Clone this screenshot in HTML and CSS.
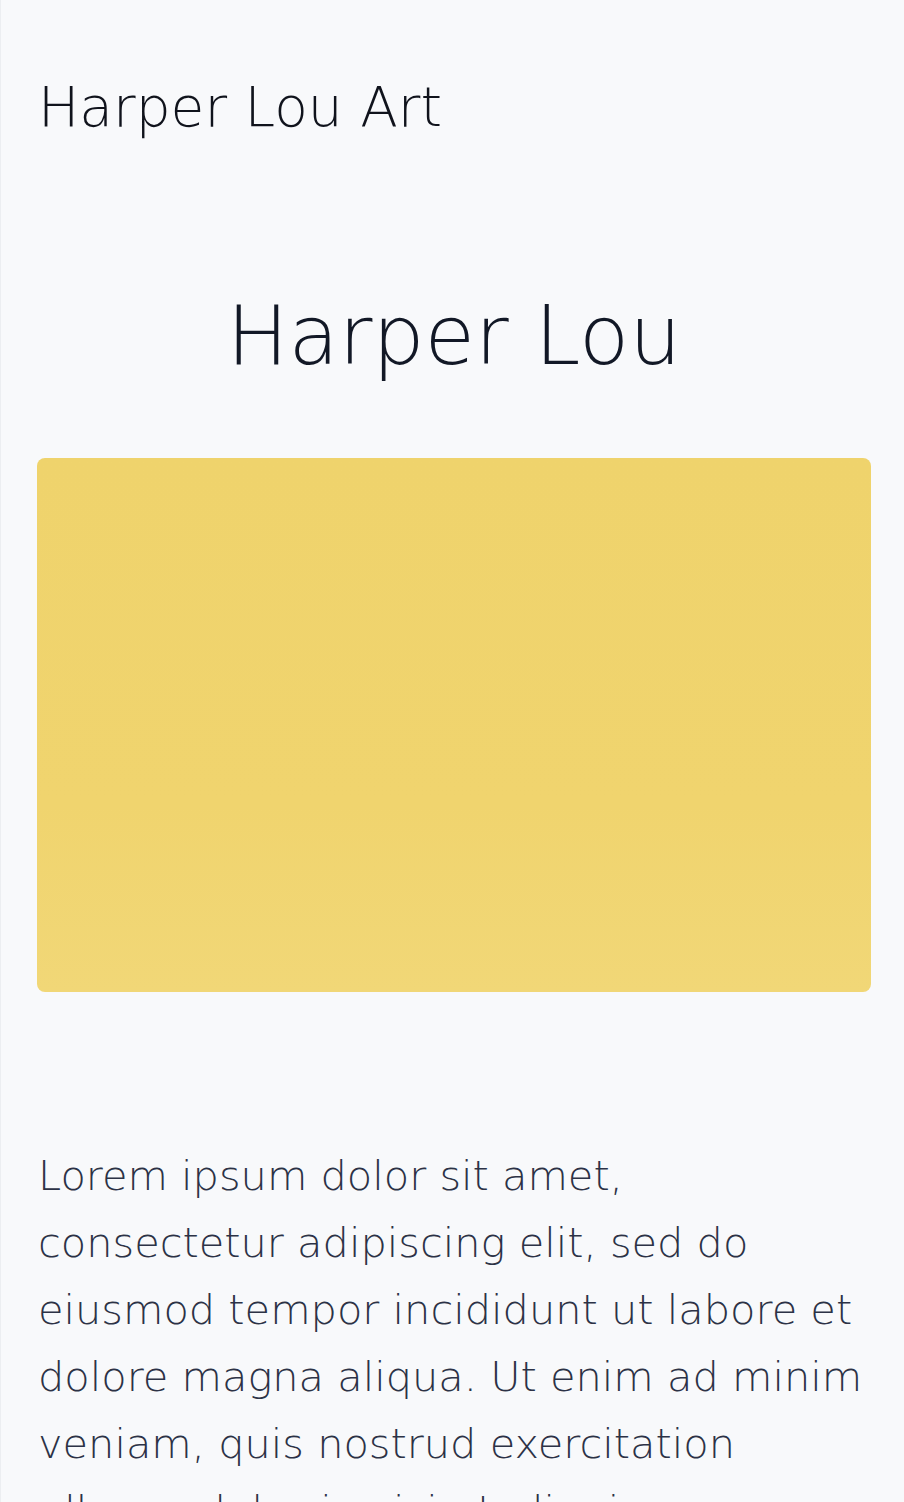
FILE: index.html
```html
<!DOCTYPE html>
<html lang="en">
<head>
<meta charset="utf-8">
<title>Harper Lou Art</title>
<link rel="stylesheet" href="styles.css">
</head>
<body>
<div class="page">
  <header class="site-header">
    <div class="brand">Harper Lou Art</div>
  </header>
  <main class="content">
    <h1 class="title">Harper Lou</h1>
    <div class="artwork"></div>
    <p class="bio">Lorem ipsum dolor sit amet, consectetur adipiscing elit, sed do eiusmod tempor incididunt ut labore et dolore magna aliqua. Ut enim ad minim veniam, quis nostrud exercitation ullamco laboris nisi ut aliquip ex ea commodo consequat.</p>
  </main>
</div>
</body>
</html>
```
FILE: styles.css
```css
html, body {
  margin: 0;
  padding: 0;
  background: #f8f9fb;
}
body {
  font-family: "DejaVu Sans", sans-serif;
  font-weight: 200;
  overflow: hidden;
}
.page {
  border-left: 1px solid #eceef1;
  padding: 0 33px 0 36px;
  min-height: 1502px;
  box-sizing: border-box;
}
.site-header {
  padding-top: 74px;
}
.brand {
  font-size: 55px;
  line-height: 66px;
  color: #10131c;
  margin-left: 1px;
}
.content {
  display: flex;
  flex-direction: column;
}
.title {
  margin: 148px 0 0;
  font-size: 82px;
  line-height: 96px;
  font-weight: 200;
  text-align: center;
  color: #121826;
}
.artwork {
  margin-top: 74px;
  height: 534px;
  border-radius: 8px;
  background: linear-gradient(180deg, #efd36c 0%, #f0d46e 65%, #f1d777 100%);
}
.bio {
  margin: 150px 0 0 1px;
  font-size: 41.5px;
  line-height: 67px;
  color: #2c3246;
}
```
